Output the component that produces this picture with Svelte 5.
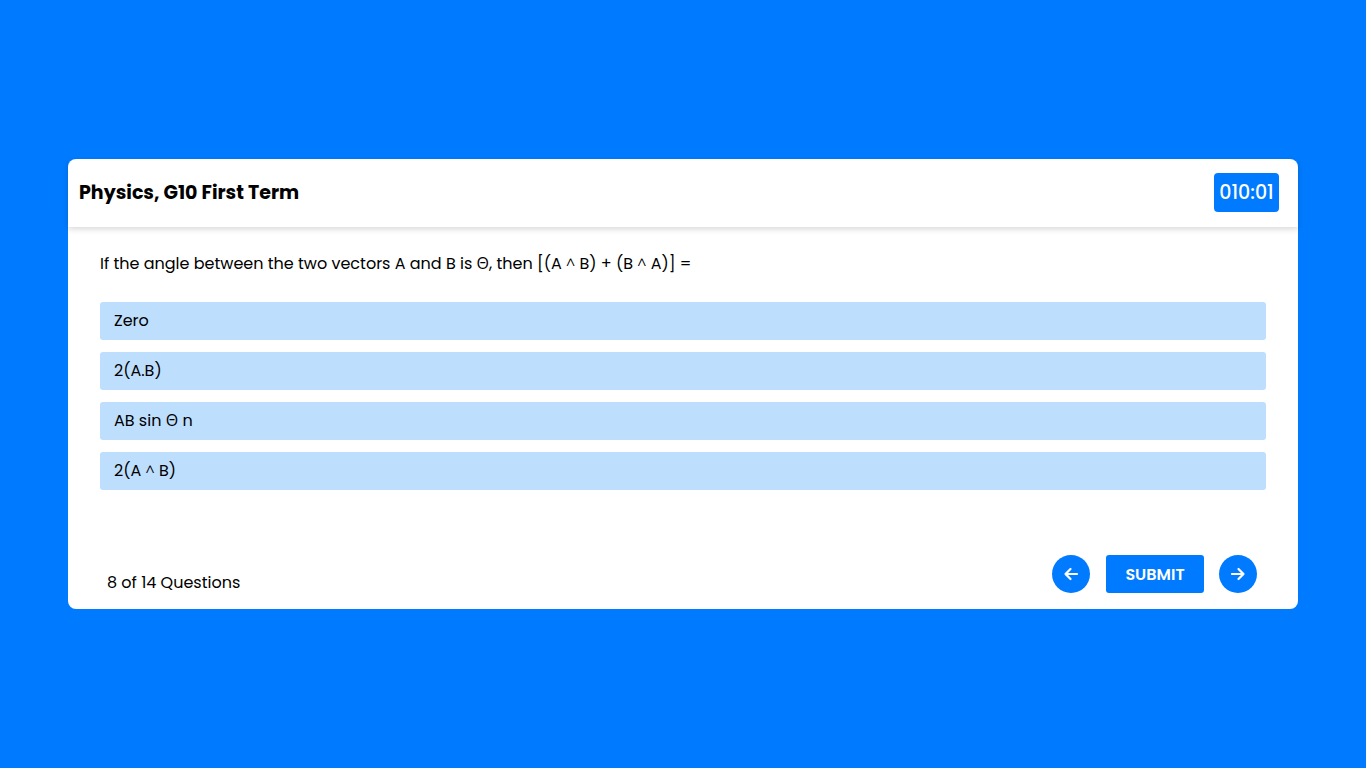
<script>
  const options = [['Zero'], ['2(A.B)'], ['AB sin Θ n'], ['2(A ', ' B)']];
</script>

<main class="page">
  <section class="card">
    <header class="head">
      <h1>Physics, G10 First Term</h1>
      <div class="timer">010:01</div>
    </header>
    <div class="body">
      <p class="question">If the angle between the two vectors A and B is Θ, then [(A <span class="caret">^</span> B) + (B <span class="caret">^</span> A)] =</p>
      <div class="options">
        {#each options as o}
          <div class="option"><span>{o[0]}{#if o.length > 1}<span class="caret">^</span>{o[1]}{/if}</span></div>
        {/each}
      </div>
    </div>
    <footer class="foot">
      <span class="count">8 of 14 Questions</span>
      <div class="actions">
        <button class="round" aria-label="Previous">
          <svg width="16" height="16" viewBox="0 0 16 16" fill="none" stroke="#fff" stroke-width="2.200" stroke-linecap="round" stroke-linejoin="round"><path d="M14 8H2.500M7.500 3 2.500 8l5 5"/></svg>
        </button>
        <button class="submit">SUBMIT</button>
        <button class="round" aria-label="Next">
          <svg width="16" height="16" viewBox="0 0 16 16" fill="none" stroke="#fff" stroke-width="2.200" stroke-linecap="round" stroke-linejoin="round"><path d="M2 8h11.500M8.500 3l5 5-5 5"/></svg>
        </button>
      </div>
    </footer>
  </section>
</main>

<style>
  :global(body) { margin: 0; background: #007bff; }
  .page { height: 768px; display: flex; align-items: center; justify-content: center; font-family: Poppins, "Open Sans", "Noto Sans", sans-serif; }
  .card { width: 1230px; height: 450px; background: #fff; border-radius: 8px; display: flex; flex-direction: column; }
  .head { height: 68px; box-sizing: border-box; display: flex; align-items: center; justify-content: space-between; padding: 0 19px 2px 11px; box-shadow: 0 2px 6px rgba(0,0,0,.16); }
  h1 { margin: 2px 0 0; font-size: 19px; line-height: 28px; font-weight: 700; color: #000; }
  .timer { background: #007bff; color: #fff; border-radius: 4px; width: 65px; height: 39px; display: flex; align-items: center; justify-content: center; font-size: 19px; font-weight: 500; }
  .body { padding: 25px 32px 0; flex: 1; }
  .question { margin: 0 0 26px; font-size: 16px; line-height: 24px; color: #000; }
  .caret { font-size: 15px; font-weight: 300; vertical-align: 1px; line-height: 1; }
  .options { display: flex; flex-direction: column; gap: 12px; }
  .option { height: 38px; box-sizing: border-box; padding: 0 14px 2px; display: flex; align-items: center; background: #bedefd; border-radius: 3px; font-size: 16px; color: #000; }
  .foot { display: flex; justify-content: space-between; align-items: flex-start; padding: 0 41px 14px 39px; }
  .count { font-size: 16px; line-height: 24px; margin-top: 18px; color: #000; }
  .actions { display: flex; gap: 16px; align-items: center; margin-top: 2px; }
  .actions .submit + .round { margin-left: -1px; }
  button { border: 0; background: #007bff; color: #fff; font-family: inherit; padding: 0; }
  .round { width: 38px; height: 38px; border-radius: 50%; display: flex; align-items: center; justify-content: center; }
  .submit { width: 98px; height: 38px; border-radius: 3px; font-size: 16px; font-weight: 600; }
</style>
